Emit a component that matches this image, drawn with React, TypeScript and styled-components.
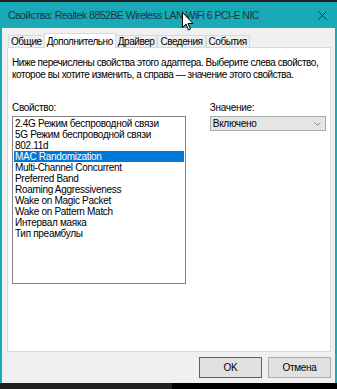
import React from "react"
import styled, { createGlobalStyle } from "styled-components"

const GlobalStyle = createGlobalStyle`
	html, body {
		margin: 0;
		padding: 0;
		background: #1c1c1c;
	}
	* {
		box-sizing: border-box;
	}
`

const Screen = styled.div`
	position: relative;
	width: 337px;
	height: 389px;
	overflow: hidden;
	display: flex;
	flex-direction: column;
	background: #1c1c1c;
	font-family: "Liberation Sans", Arial, sans-serif;
	font-size: 10px;
	letter-spacing: -0.3px;
	color: #000;
`

const TopStrip = styled.div`
	height: 2px;
	background: #202020;
`

const Window = styled.div`
	flex: 1;
	display: flex;
	flex-direction: column;
	border-left: 2px solid #19a9b7;
	border-right: 2px solid #19a9b7;
	background: #f0f0f0;
`

const TitleBar = styled.div`
	height: 26px;
	display: flex;
	align-items: center;
	justify-content: space-between;
	padding: 0 8px 0 6px;
	background: #19a9b7;
	color: #17393e;
	font-size: 10.5px;
	letter-spacing: -0.52px;
`

const CloseIcon = styled.svg`
	width: 9px;
	height: 9px;
`

const Body = styled.div`
	flex: 1;
	display: flex;
	flex-direction: column;
	padding: 5px 4px 0 5px;
`

const TabRow = styled.div`
	display: flex;
	align-items: flex-end;
	height: 15px;
	padding-left: 1px;
	letter-spacing: -0.45px;
`

const Tab = styled.div<{ active?: boolean }>`
	height: ${(p) => (p.active ? "15px" : "13px")};
	padding: 0 2px;
	margin: 0 ${(p) => (p.active ? "-1px" : "0")};
	display: flex;
	align-items: center;
	background: ${(p) => (p.active ? "#fff" : "#f0f0f0")};
	border: 1px solid #d9d9d9;
	border-bottom: ${(p) => (p.active ? "none" : "1px solid #d9d9d9")};
	position: relative;
	z-index: ${(p) => (p.active ? 1 : 0)};
	white-space: nowrap;
`

const Panel = styled.div`
	height: 305px;
	background: #fff;
	border: 1px solid #d9d9d9;
	margin-top: -1px;
	padding: 9px 4px 0 4px;
	display: flex;
	flex-direction: column;
`

const Intro = styled.p`
	margin: 0;
	line-height: 12px;
	white-space: nowrap;
	letter-spacing: -0.45px;
`

const Columns = styled.div`
	display: flex;
	gap: 24px;
	margin-top: 21px;
`

const Column = styled.div<{ width: number }>`
	width: ${(p) => p.width}px;
	display: flex;
	flex-direction: column;
`

const Label = styled.div`
	height: 14px;
	line-height: 12px;
`

const ListBox = styled.div`
	height: 168px;
	border: 1px solid #828282;
	padding: 1px;
	display: flex;
	flex-direction: column;
`

const ListItem = styled.div<{ selected?: boolean }>`
	height: 11px;
	line-height: 11px;
	padding-left: 1px;
	background: ${(p) => (p.selected ? "#0078d7" : "transparent")};
	color: ${(p) => (p.selected ? "#fff" : "#000")};
	white-space: nowrap;
`

const Select = styled.div`
	height: 15px;
	display: flex;
	align-items: center;
	justify-content: space-between;
	padding: 0 4px 0 2px;
	background: #e5e5e5;
	border: 1px solid #acacac;
`

const Chevron = styled.svg`
	width: 7px;
	height: 4px;
`

const Footer = styled.div`
	flex: 1;
	display: flex;
	justify-content: flex-end;
	align-items: flex-start;
	gap: 6px;
	padding: 5px 0 0 0;
`

const Button = styled.div<{ primary?: boolean }>`
	flex: none;
	width: 63px;
	height: 21px;
	display: flex;
	align-items: center;
	justify-content: center;
	background: #e1e1e1;
	border: 1px solid ${(p) => (p.primary ? "#0078d7" : "#adadad")};
`

const Taskbar = styled.div`
	height: 6px;
	display: flex;
`

const TaskbarPart = styled.div<{ tone: string; grow?: boolean }>`
	width: ${(p) => (p.grow ? "auto" : "172px")};
	flex: ${(p) => (p.grow ? 1 : "none")};
	background: ${(p) => p.tone};
`

const Cursor = styled.svg`
	position: absolute;
	left: 182px;
	top: 12px;
	width: 12px;
	height: 19px;
`

const tabs = ["Общие", "Дополнительно", "Драйвер", "Сведения", "События"]

const properties = [
	"2.4G Режим беспроводной связи",
	"5G Режим беспроводной связи",
	"802.11d",
	"MAC Randomization",
	"Multi-Channel Concurrent",
	"Preferred Band",
	"Roaming Aggressiveness",
	"Wake on Magic Packet",
	"Wake on Pattern Match",
	"Интервал маяка",
	"Тип преамбулы",
]

export default function App() {
	return (
		<Screen>
			<GlobalStyle />
			<TopStrip />
			<Window>
				<TitleBar>
					<span>Свойства: Realtek 8852BE Wireless LAN WiFi 6 PCI-E NIC</span>
					<CloseIcon viewBox="0 0 9 9">
						<path d="M0.5 0.5 L8.5 8.5 M8.5 0.5 L0.5 8.5" stroke="#17383c" strokeWidth="1" />
					</CloseIcon>
				</TitleBar>
				<Body>
					<TabRow>
						{tabs.map((t) => (
							<Tab key={t} active={t === "Дополнительно"}>
								{t}
							</Tab>
						))}
					</TabRow>
					<Panel>
						<Intro>
							Ниже перечислены свойства этого адаптера. Выберите слева свойство,
							<br />
							которое вы хотите изменить, а справа — значение этого свойства.
						</Intro>
						<Columns>
							<Column width={175}>
								<Label>Свойство:</Label>
								<ListBox>
									{properties.map((p) => (
										<ListItem key={p} selected={p === "MAC Randomization"}>
											{p}
										</ListItem>
									))}
								</ListBox>
							</Column>
							<Column width={117}>
								<Label>Значение:</Label>
								<Select>
									<span>Включено</span>
									<Chevron viewBox="0 0 7 4">
										<path d="M0.5 0.5 L3.5 3.5 L6.5 0.5" stroke="#888" fill="none" />
									</Chevron>
								</Select>
							</Column>
						</Columns>
					</Panel>
					<Footer>
						<Button primary>OK</Button>
						<Button>Отмена</Button>
					</Footer>
				</Body>
			</Window>
			<Taskbar>
				<TaskbarPart tone="#202020" />
				<TaskbarPart tone="#000" grow />
			</Taskbar>
			<Cursor viewBox="0 0 12 19">
				<path d="M0.5 0.5 L0.5 15.5 L4 12 L6.5 18 L8.5 17 L6 11.5 L11 11.5 Z" fill="#fff" stroke="#000" strokeWidth="1" strokeLinejoin="round" />
			</Cursor>
		</Screen>
	)
}
